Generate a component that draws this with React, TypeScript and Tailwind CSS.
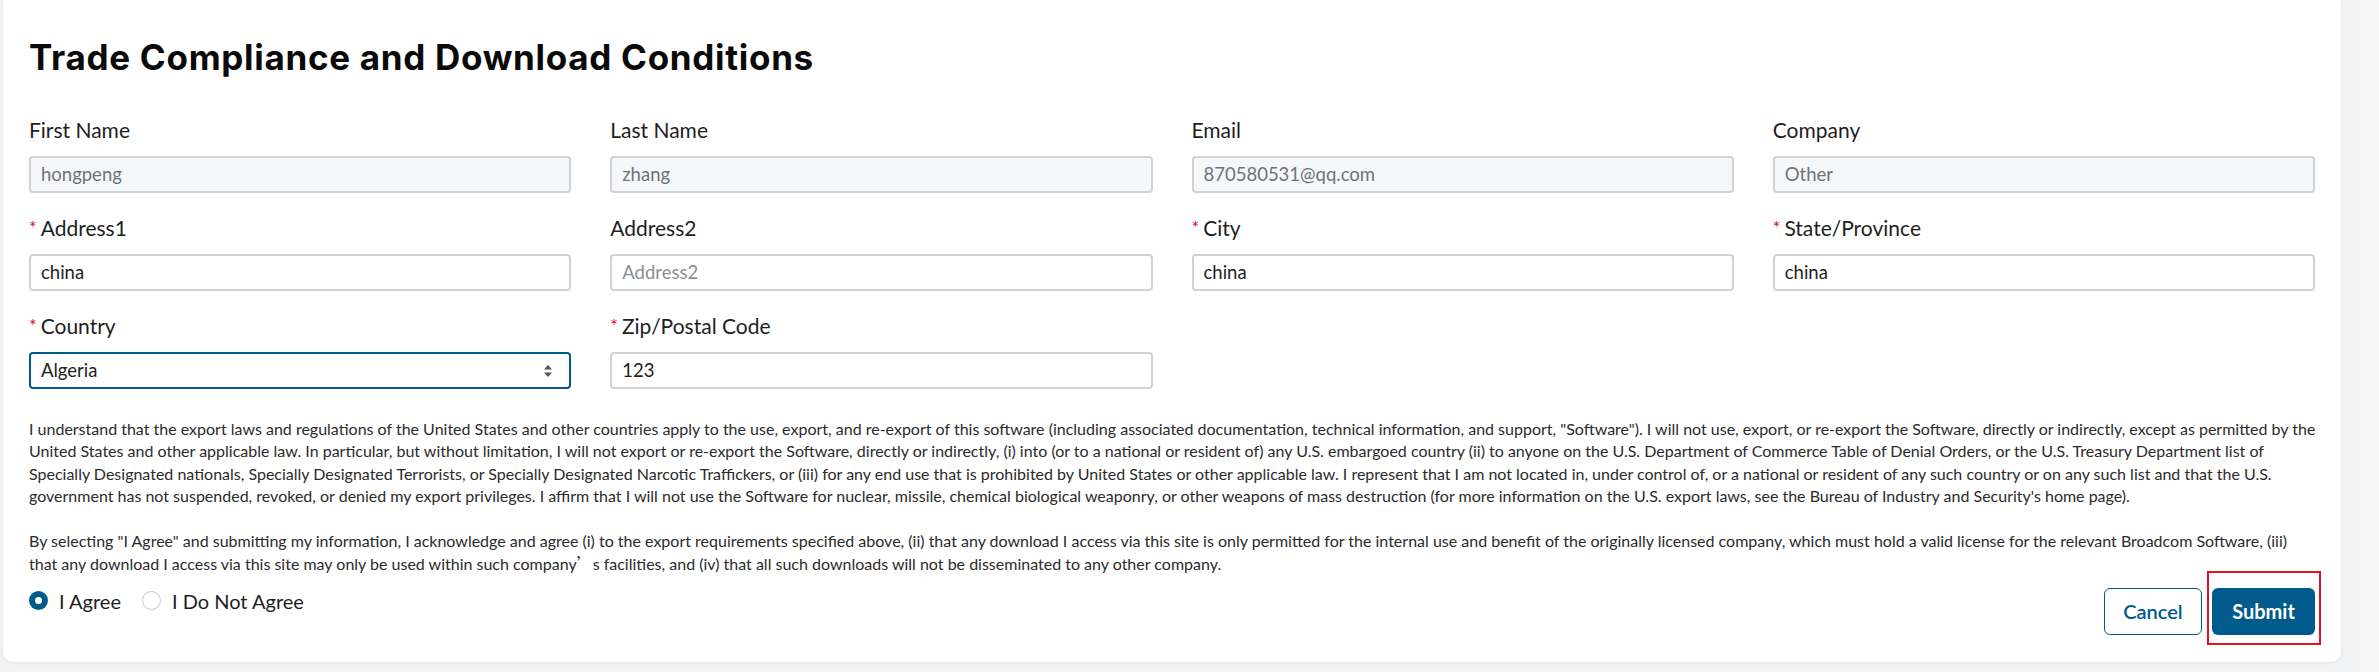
import React from "react";

const SANS = "font-['Lato','Noto_Sans',sans-serif]";

function Label({ text, required }: { text: string; required?: boolean }) {
  return (
    <div className="h-[24px] text-[21px] leading-[24px] text-[#1e1e1e] whitespace-nowrap">
      {required && <span className="text-[#e4002b] text-[18px] align-top relative top-[-1px] mr-[4px]">*</span>}
      {text}
    </div>
  );
}

function Field({
  label,
  required,
  value,
  placeholder,
  disabled,
}: {
  label: string;
  required?: boolean;
  value?: string;
  placeholder?: string;
  disabled?: boolean;
}) {
  return (
    <div className="flex flex-col">
      <Label text={label} required={required} />
      <div
        className={
          "mt-[14px] h-[37px] rounded-[4px] border-2 border-[#cfd3d8] flex items-center px-[10px] text-[18.5px] " +
          (disabled ? "bg-[#f6f7f9] text-[#6e7378]" : "bg-white text-[#1e1e1e]")
        }
      >
        {value ? value : <span className="text-[#8a8f95]">{placeholder}</span>}
      </div>
    </div>
  );
}

function SelectField() {
  return (
    <div className="flex flex-col">
      <Label text="Country" required />
      <div className="mt-[14px] h-[37px] rounded-[4px] border-2 border-[#005b8c] bg-white flex items-center justify-between pl-[10px] pr-[16px] text-[18.5px] text-[#1e1e1e]">
        <span>Algeria</span>
        <svg width="10" height="16" viewBox="0 0 10 16">
          <path d="M5 2 L9 6.5 H1 Z" fill="#555" />
          <path d="M5 14 L9 9.5 H1 Z" fill="#555" />
        </svg>
      </div>
    </div>
  );
}

export default function App() {
  return (
    <div className={"flex h-[672px] w-[2379px] bg-[#f1f2f4] overflow-hidden " + SANS}>
      <div className="ml-[3px] w-[2338px] h-[662px] bg-white rounded-b-[10px] shadow-[0_1px_4px_rgba(0,0,0,0.06)] px-[26px] pt-[36px] flex flex-col">
        <h1 className="font-['Inter',sans-serif] font-bold text-[35px] leading-[42px] text-[#0a0a0a] tracking-[0.7px] whitespace-nowrap">
          Trade Compliance and Download Conditions
        </h1>

        <div className="mt-[40px] grid grid-cols-4 gap-x-[39px] gap-y-[23px]">
          <Field label="First Name" value="hongpeng" disabled />
          <Field label="Last Name" value="zhang" disabled />
          <Field label="Email" value="870580531@qq.com" disabled />
          <Field label="Company" value="Other" disabled />
          <Field label="Address1" required value="china" />
          <Field label="Address2" placeholder="Address2" />
          <Field label="City" required value="china" />
          <Field label="State/Province" required value="china" />
          <SelectField />
          <Field label="Zip/Postal Code" required value="123" />
        </div>

        <div className="mt-[29px] text-[16px] leading-[22.4px] text-[#2b2b2b] whitespace-nowrap">
          <p>
            I understand that the export laws and regulations of the United States and other countries apply to the use, export, and re-export of this software (including associated documentation, technical information, and support, "Software"). I will not use, export, or re-export the Software, directly or indirectly, except as permitted by the
            <br />
            United States and other applicable law. In particular, but without limitation, I will not export or re-export the Software, directly or indirectly, (i) into (or to a national or resident of) any U.S. embargoed country (ii) to anyone on the U.S. Department of Commerce Table of Denial Orders, or the U.S. Treasury Department list of
            <br />
            Specially Designated nationals, Specially Designated Terrorists, or Specially Designated Narcotic Traffickers, or (iii) for any end use that is prohibited by United States or other applicable law. I represent that I am not located in, under control of, or a national or resident of any such country or on any such list and that the U.S.
            <br />
            government has not suspended, revoked, or denied my export privileges. I affirm that I will not use the Software for nuclear, missile, chemical biological weaponry, or other weapons of mass destruction (for more information on the U.S. export laws, see the Bureau of Industry and Security's home page).
          </p>
          <p className="mt-[22.4px]">
            By selecting "I Agree" and submitting my information, I acknowledge and agree (i) to the export requirements specified above, (ii) that any download I access via this site is only permitted for the internal use and benefit of the originally licensed company, which must hold a valid license for the relevant Broadcom Software, (iii)
            <br />
            that any download I access via this site may only be used within such company
            <span className="font-['Noto_Sans_CJK_SC',sans-serif]">’</span>s facilities, and (iv) that all such downloads will not be disseminated to any other company.
          </p>
        </div>

        <div className="mt-[12px] flex items-start justify-between">
          <div className="flex items-center h-[26px] text-[20px] text-[#1e1e1e]">
            <span className="w-[19px] h-[19px] rounded-full bg-[#005b8c] flex items-center justify-center">
              <span className="w-[7px] h-[7px] rounded-full bg-white" />
            </span>
            <span className="ml-[11px]">I Agree</span>
            <span className="ml-[21px] w-[19px] h-[19px] rounded-full border border-[#c3c7cc] bg-white" />
            <span className="ml-[11px]">I Do Not Agree</span>
          </div>
          <div className="flex gap-[10px]">
            <button className="w-[98px] h-[47px] rounded-[6px] border border-[#005b8c] bg-white text-[#005b8c] text-[20px] font-semibold">
              Cancel
            </button>
            <div className="relative">
              <button className="w-[103px] h-[47px] rounded-[6px] bg-[#005b8c] text-white text-[20px] font-bold">
                Submit
              </button>
              <div className="absolute -top-[17px] -left-[5px] -right-[6px] -bottom-[10px] border-2 border-[#e3141f] pointer-events-none" />
            </div>
          </div>
        </div>
      </div>
      <div className="ml-auto w-[19px] h-full bg-[#f8f8f9]" />
    </div>
  );
}
